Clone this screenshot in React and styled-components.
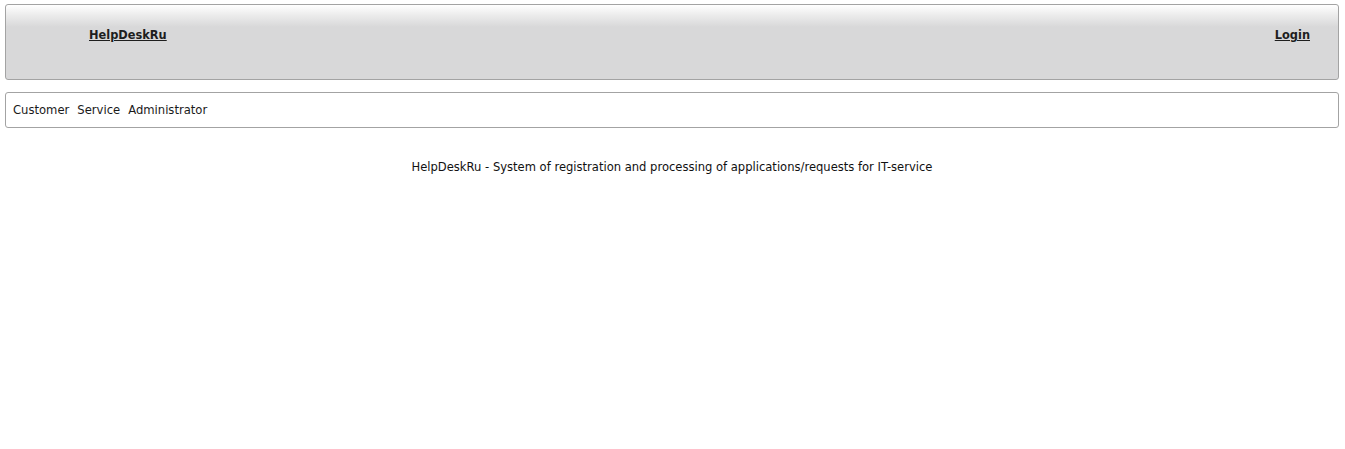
import React from 'react'
import styled, { createGlobalStyle } from 'styled-components'

const GlobalStyle = createGlobalStyle`
body {
  margin: 0;
  background: #fff;
  font-family: Tahoma, "DejaVu Sans", Verdana, sans-serif;
  color: #111;
}
`

const Page = styled.div`
padding: 4px 6px 0 5px;
display: flex;
flex-direction: column;
gap: 12px;
`

const Header = styled.header`
height: 74px;
border: 1px solid #a3a3a3;
border-radius: 3px;
background: linear-gradient(to bottom, #ffffff 0px, #ececec 10px, #d8d8d9 22px, #d8d8d9 100%);
display: flex;
justify-content: space-between;
align-items: flex-start;
padding: 0 28px 0 83px;
`

const HeadLink = styled.a`
margin-top: 23px;
font-size: 11.4px;
font-weight: bold;
color: #1e1e1e;
text-decoration: underline;
cursor: pointer;
`

const Nav = styled.nav`
height: 34px;
border: 1px solid #a3a3a3;
border-radius: 3px;
display: flex;
align-items: center;
padding: 0 7px;
gap: 8px;
font-size: 11.6px;
`

const NavItem = styled.span`
color: #1a1a1a;
cursor: pointer;
`

const Footer = styled.div`
margin-top: 20px;
text-align: center;
font-size: 11.55px;
color: #111;
`

function App() {
  return (
    <>
      <GlobalStyle />
      <Page>
        <Header>
          <HeadLink>HelpDeskRu</HeadLink>
          <HeadLink>Login</HeadLink>
        </Header>
        <Nav>
          <NavItem>Customer</NavItem>
          <NavItem>Service</NavItem>
          <NavItem>Administrator</NavItem>
        </Nav>
        <Footer>HelpDeskRu - System of registration and processing of applications/requests for IT-service</Footer>
      </Page>
    </>
  )
}

export default App
